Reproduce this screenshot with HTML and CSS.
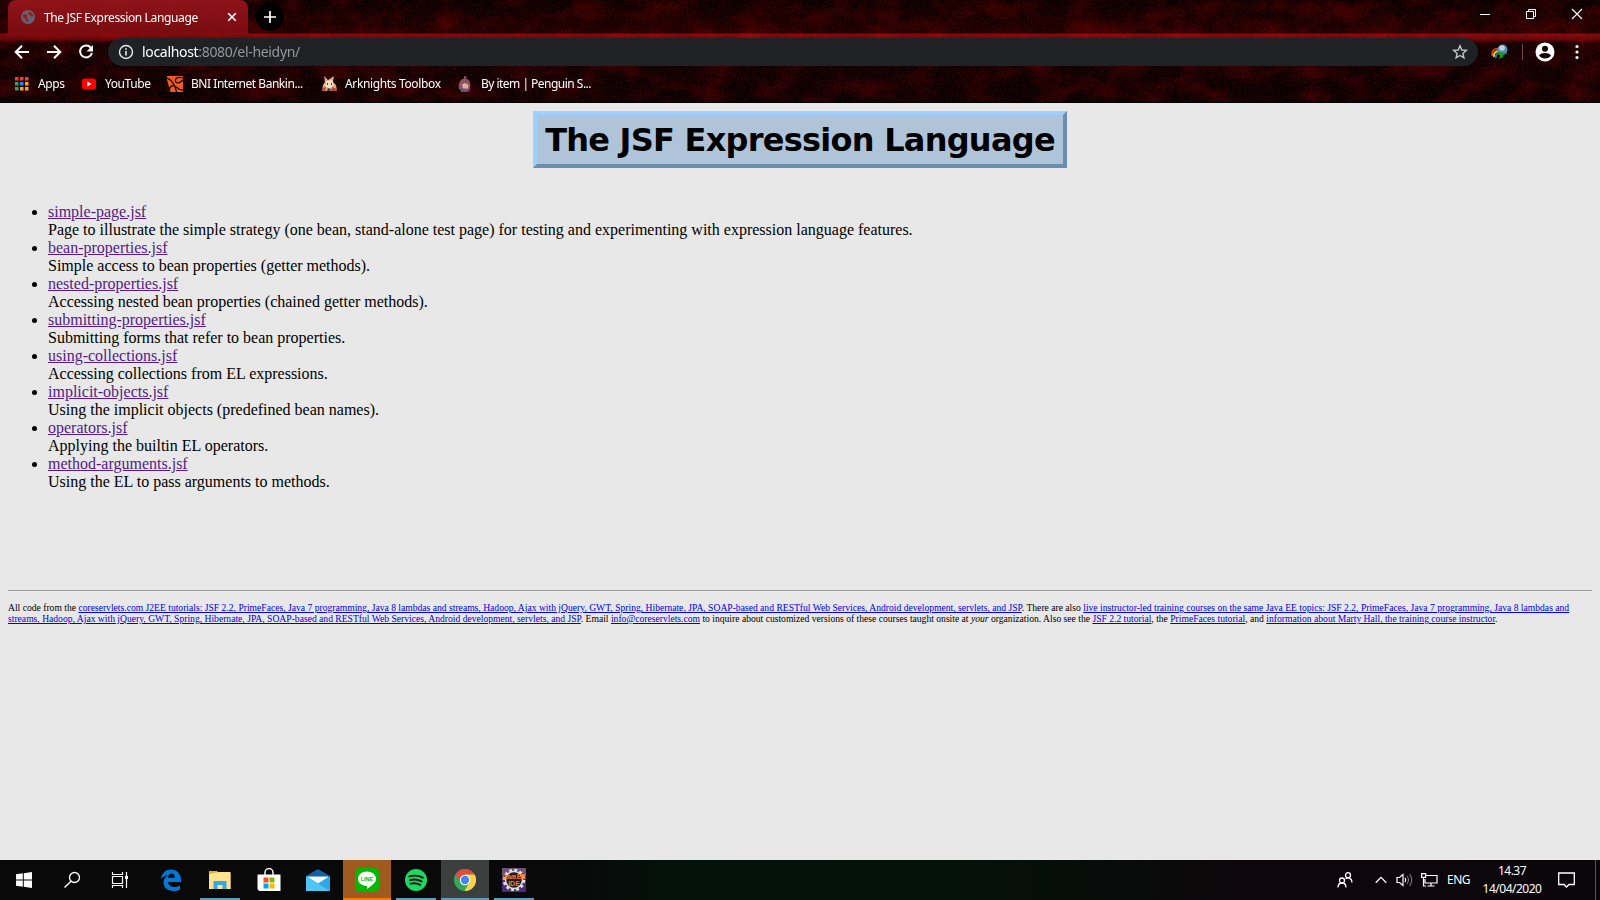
FILE: index.html
```
<!DOCTYPE html>
<html lang="en">
<head>
<meta charset="utf-8">
<title>The JSF Expression Language</title>
<link rel="stylesheet" href="styles.css">
</head>
<body>
<header class="chrome">
  <svg class="texture" width="1600" height="103" aria-hidden="true">
    <filter id="rock" x="0" y="0" width="100%" height="100%" color-interpolation-filters="sRGB"><feTurbulence type="fractalNoise" baseFrequency="0.03 0.05" numOctaves="5" seed="8"/><feColorMatrix values="1 0 0 0 -.4  0 0 0 0 0  0 0 0 0 0  0 0 0 0 1"/></filter>
    <filter id="grain" x="0" y="0" width="100%" height="100%" color-interpolation-filters="sRGB"><feTurbulence type="fractalNoise" baseFrequency="0.55" numOctaves="2" seed="3"/><feColorMatrix values="0 0 0 0 .35  0 0 0 0 .03  0 0 0 0 .03  2 0 0 0 -.8"/></filter>
    <rect class="rock" width="1600" height="103" filter="url(#rock)"/>
    <rect class="grain" width="1600" height="103" filter="url(#grain)"/>
  </svg>
  <div class="tabstrip">
    <div class="tab">
      <svg width="14" height="14" viewBox="0 0 14 14"><circle cx="7" cy="7" r="7" fill="#5f6670"/><path d="M2 4.500l3-.5 1.500 2-1 1.500 2 1.500-1 3-1.500-.5L4.500 9 2 7zM8 1.500l3 1.500 1.500 3-2 .8-1.500-1.600-2-.7z" fill="#9a1c20"/></svg>
      <span class="tab-title">The JSF Expression Language</span>
      <svg width="10" height="10" viewBox="0 0 10 10"><path d="M1.200 1.200l7.600 7.600M8.800 1.200L1.200 8.800" stroke="#fff" stroke-width="1.600"/></svg>
    </div>
    <div class="newtab"><svg width="12" height="12" viewBox="0 0 12 12"><path d="M6 0v12M0 6h12" stroke="#fff" stroke-width="1.700"/></svg></div>
    <div class="winctl">
      <svg width="12" height="12" viewBox="0 0 12 12"><path d="M1 6.500h10" stroke="#fff"/></svg>
      <svg width="12" height="12" viewBox="0 0 12 12"><path d="M1.500 3.500h7v7h-7zM3.500 3.500v-2h7v7h-2" fill="none" stroke="#fff"/></svg>
      <svg width="12" height="12" viewBox="0 0 12 12"><path d="M1 1l10 10M11 1L1 11" stroke="#fff" stroke-width="1.100"/></svg>
    </div>
  </div>
  <div class="toolbar">
    <div class="nav">
      <svg width="16" height="16" viewBox="0 0 16 16"><path d="M15 8H2.200M8 1.700L1.700 8 8 14.300" fill="none" stroke="#fff" stroke-width="2"/></svg>
      <svg width="16" height="16" viewBox="0 0 16 16"><path d="M1 8h12.800M8 1.700L14.300 8 8 14.300" fill="none" stroke="#fff" stroke-width="2"/></svg>
      <svg width="16" height="16" viewBox="0 0 16 16"><path d="M12.700 3.500A6 6 0 1 0 13.900 9" fill="none" stroke="#fff" stroke-width="2"/><path d="M15 1v6.500H8.500z" fill="#fff"/></svg>
    </div>
    <div class="omnibox">
      <svg width="16" height="16" viewBox="0 0 16 16"><circle cx="8" cy="8" r="6.500" fill="none" stroke="#e8eaed" stroke-width="1.400"/><path d="M8 7v4.500M8 4.200v1.600" stroke="#e8eaed" stroke-width="1.600"/></svg>
      <span class="url"><b>localhost</b>:8080/el-heidyn/</span>
      <svg class="star" width="16" height="16" viewBox="0 0 16 16"><path d="M8 1.800l1.800 4.200 4.500.4-3.400 3 1 4.500L8 11.500l-3.900 2.400 1-4.500-3.400-3 4.500-.4z" fill="none" stroke="#c5c7ca" stroke-width="1.400"/></svg>
    </div>
    <div class="actions">
      <svg width="18" height="16" viewBox="0 0 18 16"><path d="M1.500 12C0 7 4 4 8 5" fill="none" stroke="#d63b20" stroke-width="2"/><path d="M3 13C2 9 5 7 8 7" fill="none" stroke="#f0d020" stroke-width="2"/><path d="M5 14C4 11 6 9 9 9" fill="none" stroke="#1677ce" stroke-width="2"/><circle cx="11.500" cy="5.500" r="5" fill="#5888c8"/><circle cx="11" cy="4" r="2.800" fill="#b8d3dc"/><path d="M6 8l11 1-5 2.500 0 1.500-4 2 1-3z" fill="#159b19"/></svg>
      <i class="sep"></i>
      <svg width="20" height="20" viewBox="0 0 20 20"><circle cx="10" cy="10" r="9.500" fill="#fff"/><circle cx="10" cy="6.800" r="3" fill="#160203"/><path d="M4 13.500c2-3.300 10-3.300 12 0-2.500 4-9.500 4-12 0z" fill="#160203"/></svg>
      <svg width="4" height="16" viewBox="0 0 4 16"><g fill="#fff"><circle cx="2" cy="2.500" r="1.600"/><circle cx="2" cy="8" r="1.600"/><circle cx="2" cy="13.500" r="1.600"/></g></svg>
    </div>
  </div>
  <nav class="bookmarks">
    <a class="bm bm-apps"><svg width="14" height="14" viewBox="0 0 14 14"><path d="M0 0h3.500v3.500H0zM5 0h3.500v3.500H5zM10 0h3.500v3.500H10z" fill="#ea4335"/><path d="M0 5h3.500v3.500H0zM0 10h3.500v3.500H0z" fill="#34a060"/><path d="M5 5h3.500v3.500H5z" fill="#2684fc"/><path d="M10 5h3.500v3.500H10zM5 10h3.500v3.500H5zM10 10h3.500v3.500H10z" fill="#f4ae08"/></svg><span>Apps</span></a>
    <a class="bm bm-yt"><svg width="16" height="16" viewBox="0 0 16 16"><rect x="1" y="2.500" width="14" height="11" rx="2.500" fill="#f00"/><path d="M6.300 5.500v5l4.200-2.500z" fill="#fff"/></svg><span>YouTube</span></a>
    <a class="bm bm-bni"><svg width="16" height="16" viewBox="0 0 16 16"><path d="M0 0h16v16H0z" fill="#f15a23"/><path d="M0 2c6 2 8 7 9.500 14M16 2C10 0 8 3 8.500 5.500 9.500 8 13 7 16 4M2 16c0-6 4-8 7-5 2 2 4 3 7 3" fill="none" stroke="#1a0807" stroke-width="1.300"/><path d="M0 4l3.500 12H0z" fill="#1a0807"/></svg><span>BNI Internet Bankin...</span></a>
    <a class="bm bm-ark"><svg width="17" height="17" viewBox="0 0 17 17"><path d="M3 1l4 4 6-4-1 6 3 3 1 6H1l1-6 2-3z" fill="#dba77b"/><path d="M5 6l6-1 2 5-4 4-5-3z" fill="#f7dfc2"/><path d="M1 13l4-1-1 4H1zM11 12l5 2v2h-6z" fill="#af4c3b"/><path d="M7 13l3 1-1 2H6zM6 8h1v2H6zM10 8h1v2h-1z" fill="#433b44"/></svg><span>Arknights Toolbox</span></a>
    <a class="bm bm-pen"><svg width="14" height="16" viewBox="0 0 14 16"><path d="M6 0l3 .5L7.500 2.500C12 3 13 8 12 13l-2 2H4l-3-2C0 8 2 3 6 2.500z" fill="#8b5360"/><path d="M4 8.500l3-1.500 3.500 2-.5 3.500H5z" fill="#dcb0a7"/><path d="M2 12l4 1 1 2 4-2 1 2-3 1H3z" fill="#5a5a68"/></svg><span>By item | Penguin S...</span></a>
  </nav>
</header>
<main class="page">
  <h1 class="title"><span>The JSF Expression Language</span></h1>
  <ul class="list">
    <li><a href="#">simple-page.jsf</a><br>Page to illustrate the simple strategy (one bean, stand-alone test page) for testing and experimenting with expression language features.</li>
    <li><a href="#">bean-properties.jsf</a><br>Simple access to bean properties (getter methods).</li>
    <li><a href="#">nested-properties.jsf</a><br>Accessing nested bean properties (chained getter methods).</li>
    <li><a href="#">submitting-properties.jsf</a><br>Submitting forms that refer to bean properties.</li>
    <li><a href="#">using-collections.jsf</a><br>Accessing collections from EL expressions.</li>
    <li><a href="#">implicit-objects.jsf</a><br>Using the implicit objects (predefined bean names).</li>
    <li><a href="#">operators.jsf</a><br>Applying the builtin EL operators.</li>
    <li><a href="#">method-arguments.jsf</a><br>Using the EL to pass arguments to methods.</li>
  </ul>
  <hr class="rule">
  <p class="foot"><span class="l1">All code from the <a href="#">coreservlets.com J2EE tutorials: JSF 2.2, PrimeFaces, Java 7 programming, Java 8 lambdas and streams, Hadoop, Ajax with jQuery, GWT, Spring, Hibernate, JPA, SOAP-based and RESTful Web Services, Android development, servlets, and JSP</a>. There are also <a href="#">live instructor-led training courses on the same Java EE topics: JSF 2.2, PrimeFaces, Java 7 programming, Java 8 lambdas and</a></span><br><span class="l2"><a href="#">streams, Hadoop, Ajax with jQuery, GWT, Spring, Hibernate, JPA, SOAP-based and RESTful Web Services, Android development, servlets, and JSP</a>. Email <a href="#">info@coreservlets.com</a> to inquire about customized versions of these courses taught onsite at <em>your</em> organization. Also see the <a href="#">JSF 2.2 tutorial</a>, the <a href="#">PrimeFaces tutorial</a>, and <a href="#">information about Marty Hall, the training course instructor</a>.</span></p>
</main>
<footer class="taskbar">
  <div class="sys">
    <div class="tb"><svg width="16" height="16" viewBox="0 0 16 16"><path d="M0 2.300L6.800 1.300v6.200H0zM7.800 1.200L16 0v7.500H7.800zM0 8.500h6.800v6.200L0 13.700zM7.800 8.500H16V16l-8.200-1.200z" fill="#fff"/></svg></div>
    <div class="tb"><svg width="18" height="18" viewBox="0 0 18 18"><circle cx="11.500" cy="6.500" r="5" fill="none" stroke="#fff" stroke-width="1.300"/><path d="M8 10.200L1.500 16.500" stroke="#fff" stroke-width="1.400"/></svg></div>
    <div class="tb"><svg width="18" height="16" viewBox="0 0 18 16"><path d="M1.500 0v2.500h10V0M1.500 16v-2.500h10V16M1.500 4.500h10v7h-10zM15.500 0v16" fill="none" stroke="#fff" stroke-width="1.200"/><path d="M14 4h3v3h-3z" fill="#fff"/></svg></div>
  </div>
  <div class="apps">
    <div class="tb"><svg width="22" height="22" viewBox="0 0 22 22"><path d="M1 10C2 3.500 6 .5 11 .5c6 0 10 4.500 10 10V13H8c.3 3 3 5 6.500 5 2 0 4-.6 5.500-1.500v4c-1.800 1-4 1.500-6.500 1.500C7 22 3.500 18 3.500 13.500c0-3 1.500-5.500 4.500-7C5 6.500 2.500 8 1 10zm7-1.300h6.800C14.800 6 13.500 4.600 11.500 4.600 9.500 4.600 8.200 6.500 8 8.700z" fill="#0078d7"/></svg></div>
    <div class="tb run"><svg width="22" height="20" viewBox="0 0 22 20"><path d="M0 1h8l2 2h11.500v16H0z" fill="#e8ae29"/><path d="M0 4l10-2h11.500v17H0z" fill="#ffe391"/><path d="M4.500 19v-8h13v8h-4v-4h-5v4z" fill="#35a9df"/></svg></div>
    <div class="tb"><svg width="24" height="24" viewBox="0 0 24 24"><path d="M8 7V4.500a4 4 0 0 1 8 0V7" fill="none" stroke="#fff" stroke-width="1.400"/><path d="M.5 6.500h23V23H2L.5 21z" fill="#fff"/><path d="M6.500 9.500h5v5h-5z" fill="#f25022"/><path d="M12.500 9.500h5v5h-5z" fill="#7fba00"/><path d="M6.500 15.500h5v5h-5z" fill="#00a4ef"/><path d="M12.500 15.500h5v5h-5z" fill="#ffb900"/></svg></div>
    <div class="tb"><svg width="24" height="24" viewBox="0 0 24 24"><path d="M0 8l12-7 12 7v5H0z" fill="#1160a8"/><path d="M2 8.500h20v8H2z" fill="#f3f8fd"/><path d="M0 8l12 7.500L24 8v15H0z" fill="#2ea8e5"/><path d="M0 8l24 15H0z" fill="#4fc5f3"/></svg></div>
    <div class="tb alert"><svg width="24" height="24" viewBox="0 0 24 24"><rect width="24" height="24" rx="4.500" fill="#00b900"/><path d="M12 3.500c5 0 9 3.200 9 7.300 0 3.500-3 6-9 10.200.4-2 .2-2.700-.4-2.900C6.500 17.700 3 14.600 3 10.800 3 6.700 7 3.500 12 3.500z" fill="#fff"/><text x="12" y="13.300" text-anchor="middle" class="linetxt">LINE</text></svg></div>
    <div class="tb run"><svg width="22" height="22" viewBox="0 0 22 22"><circle cx="11" cy="11" r="11" fill="#1ed760"/><path d="M4.300 7.400c4.600-1.300 9.600-.9 13.500 1.300M5 11.200c4-1.100 8-.7 11.500 1.200M5.600 14.700c3.400-.8 6.600-.5 9.600 1.100" fill="none" stroke="#111814" stroke-width="1.900" stroke-linecap="round"/></svg></div>
    <div class="tb run active"><svg width="22" height="22" viewBox="0 0 22 22"><circle cx="11" cy="11" r="11" fill="#34a853"/><path d="M1.500 5.500A11 11 0 0 1 20.500 5.500L11 6 6.500 13.500z" fill="#e04a3f"/><path d="M20.500 5.500A11 11 0 0 1 10.500 22L15.500 13.500 11 5.500z" fill="#ffd14a"/><circle cx="11" cy="11" r="5.300" fill="#fff"/><circle cx="11" cy="11" r="4.200" fill="#4285f4"/></svg></div>
    <div class="tb run"><svg width="24" height="24" viewBox="0 0 24 24"><rect width="24" height="24" fill="#4d2d74"/><path d="M0 0h24v8H0z" fill="#6d5579"/><circle cx="12" cy="12" r="9.800" fill="none" stroke="#e1e1e1" stroke-width="3" stroke-dasharray="2.800 2.330"/><circle cx="12" cy="12" r="8.500" fill="#211c24" stroke="#ddd" stroke-width="1.500"/><text x="12" y="11.300" text-anchor="middle" class="eetxt" textLength="23">Java EE</text><text x="12" y="17.800" text-anchor="middle" class="eetxt">IDE</text></svg></div>
  </div>
  <div class="tray">
    <svg class="people" width="16" height="16" viewBox="0 0 16 16"><g fill="none" stroke="#fff" stroke-width="1.300"><circle cx="5" cy="8.500" r="2.500"/><path d="M1 15.500c0-6 8-6 8 0"/><circle cx="11" cy="3.200" r="2.500"/><path d="M8.500 7c3-2.500 6.500-.5 6.500 3.500"/></g></svg>
    <svg class="chev" width="12" height="8" viewBox="0 0 12 8"><path d="M.7 6.700L6 1.400l5.300 5.300" fill="none" stroke="#fff" stroke-width="1.300"/></svg>
    <svg class="vol" width="17" height="14" viewBox="0 0 17 14"><path d="M1 4.500h2.500L7 1.500v11L3.500 9.500H1z" fill="none" stroke="#fff" stroke-width="1.200"/><path d="M9 4.800q1.500 2.200 0 4.400" fill="none" stroke="#fff" stroke-width="1.200"/><path d="M11 3q3 4 0 8M13.500 1.200q4.500 5.800 0 11.600" fill="none" stroke="#777" stroke-width="1.100"/></svg>
    <svg class="net" width="17" height="14" viewBox="0 0 17 14"><path d="M5 2.500h11v7.500H4V6M10 10v3M6.500 13h7M.6.6h4v3.800h-4zM2.500 4.500V13H5" fill="none" stroke="#fff" stroke-width="1.200"/></svg>
    <span class="lang">ENG</span>
    <div class="clock"><span class="time">14.37</span><span class="date">14/04/2020</span></div>
    <svg class="note" width="17" height="17" viewBox="0 0 17 17"><path d="M.7 1h15.600v11.500H11L8.500 15 6 12.500H.7z" fill="none" stroke="#fff" stroke-width="1.300"/></svg>
  </div>
</footer>
</body>
</html>
```
FILE: styles.css
```
* { box-sizing: border-box; }
html, body { height: 100%; }
body { margin: 0; display: flex; flex-direction: column; height: 900px; overflow: hidden; background: #e8e8e8; font-family: "Liberation Serif", serif; }
svg { display: block; flex: none; }

.chrome { position: relative; isolation: isolate; flex: none; height: 103px; background: linear-gradient(#050000 0, #1b0001 33px, #7e080b 34px, #5d0709 39px, #0e0001 43px, #060001 100%); color: #fff; font: 12px "Noto Sans", "Open Sans", sans-serif; overflow: hidden; border-bottom: 1px solid #000; }
.texture { position: absolute; left: 0; top: 0; z-index: -1; mix-blend-mode: screen; pointer-events: none; }
.rock { opacity: .4; }
.grain { opacity: .45; mix-blend-mode: screen; }
.tabstrip, .toolbar, .bookmarks { display: flex; align-items: center; white-space: nowrap; }
.tabstrip { height: 34px; padding-left: 8px; }
.tab { display: flex; align-items: center; width: 240px; height: 34px; padding: 0 11px 0 13px; border-radius: 8px 8px 0 0; background: linear-gradient(rgba(158, 22, 28, .88), rgba(135, 14, 18, .85)); }
.tab-title { flex: 1; padding-left: 9px; letter-spacing: -.36px; }
.newtab { display: grid; place-items: center; width: 28px; height: 28px; margin-left: 8px; border-radius: 50%; background: #000; }
.winctl { display: flex; gap: 34px; margin: -6px 17px 0 auto; }

.toolbar { height: 36px; }
.nav { display: flex; gap: 16px; padding-left: 14px; width: 108px; }
.omnibox { display: flex; align-items: center; flex: 1; height: 28px; padding: 0 10px; border-radius: 14px; background: #202124; }
.url { flex: 1; padding-left: 8px; margin-top: -1px; font-size: 14px; color: #94989d; letter-spacing: -.32px; }
.url b { font-weight: 400; color: #fff; }
.actions { display: flex; align-items: center; width: 122px; padding-left: 13px; }
.sep { width: 1px; height: 16px; margin: 0 12px 0 13px; background: #6b4b4d; }
.actions svg:last-child { margin-left: 20px; }
.bookmarks { height: 27px; padding-left: 15px; }
.bm { display: flex; align-items: center; gap: 9px; letter-spacing: -.42px; }
.bm span { margin-top: -1px; }
.bm-apps { width: 66px; }
.bm-yt { width: 86px; gap: 8px; }
.bm-bni { width: 154px; gap: 8px; letter-spacing: -.46px; }
.bm-ark { width: 137px; gap: 7px; letter-spacing: -.36px; }
.bm-pen { letter-spacing: -.52px; }

.page { flex: 1; padding: 8px 8px 0; font-size: 16px; line-height: 18px; color: #000; }
.title { width: 534px; height: 57px; margin: 0 auto; border: 4px solid; border-color: #9bd0ff #6b8eae #6b8eae #9bd0ff; background: #b0c4d9; font: bold 32px/50px "DejaVu Sans", sans-serif; letter-spacing: -.75px; text-align: center; white-space: nowrap; }
.list { margin: 35px 0 0; padding-left: 40px; }
.list a { color: #551a8b; }
.rule { margin: 99px 0 0; border: solid; border-width: 1px 0; border-color: #9a9a9a #eee #eee #9a9a9a; }
.foot { margin: 10px 0 0; font-size: 9.607px; letter-spacing: .003px; line-height: 11px; white-space: nowrap; }
.foot a { color: #00e; }

.taskbar { flex: none; display: flex; height: 40px; background: linear-gradient(90deg, #090909 0, #090909 35%, #03120b 43%, #041109 60%, #0d070b 78%, #0b060a 100%); color: #fff; font: 12px "Noto Sans", "Open Sans", sans-serif; }
.sys { display: flex; width: 147px; }
.apps { display: flex; gap: 1px; }
.tb { display: grid; place-items: center; width: 48px; height: 40px; }
.run { background: linear-gradient(#5d9dbe, #5d9dbe) center bottom / 40px 2px no-repeat; }
.active { background-color: #3b3f3e; background-size: 48px 2px; }
.alert { background: #a0591f; border-bottom: 2px solid #ff7900; padding-top: 2px; }
.linetxt { font: bold 5.500px "Liberation Sans", sans-serif; fill: #00b900; }
.eetxt { font: bold 7px "Liberation Sans", sans-serif; fill: #f27a1a; }
.tray { display: flex; align-items: center; width: 259px; margin: 0 4px 0 auto; border-right: 1px solid #555; }
.chev { margin-left: 22px; }
.vol { margin-left: 9px; }
.net { margin-left: 8px; }
.lang { width: 26px; margin: -2px 0 0 9px; letter-spacing: -.5px; }
.clock { display: flex; flex-direction: column; align-items: center; width: 60px; margin-left: 9px; line-height: 18px; letter-spacing: -.5px; white-space: nowrap; }
.note { margin-left: 16px; }
```
